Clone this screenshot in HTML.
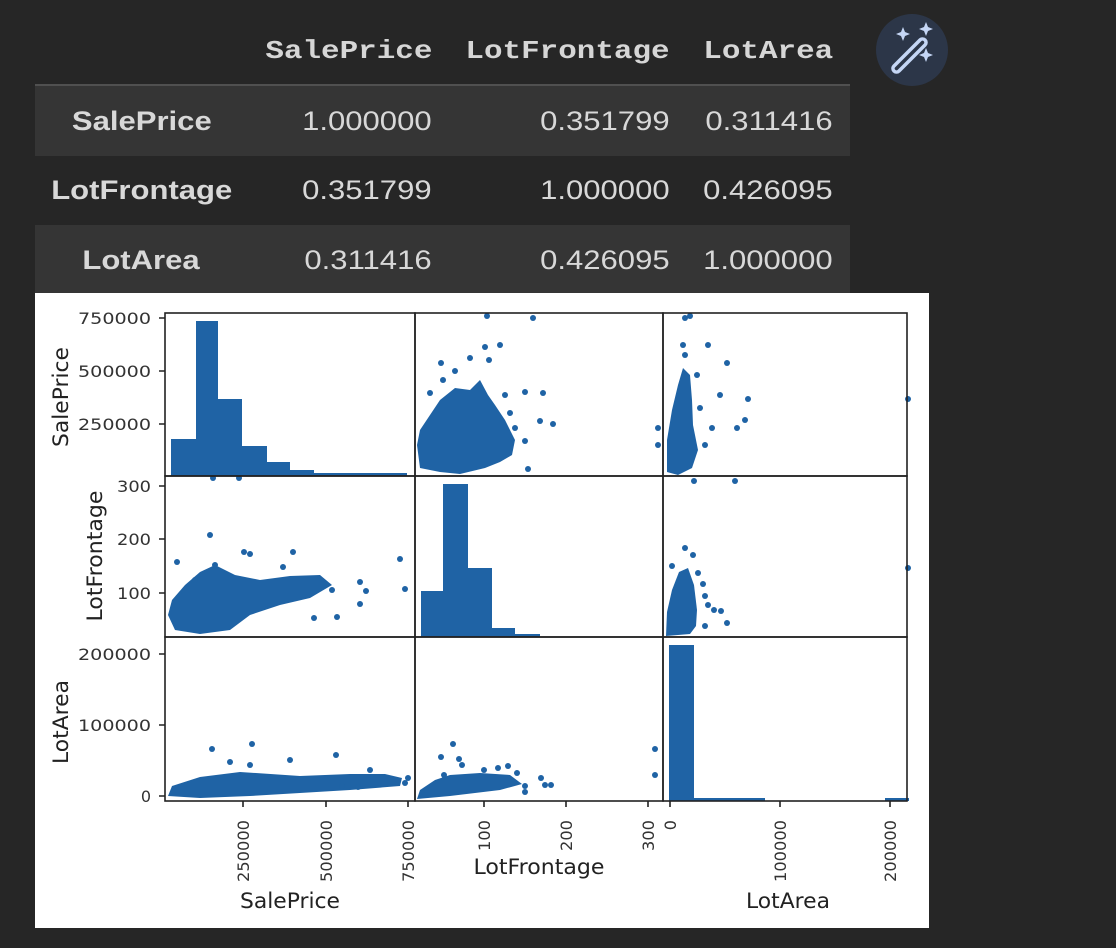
<!DOCTYPE html>
<html><head><meta charset="utf-8"><style>
body{margin:0;width:1116px;height:948px;background:#262626;overflow:hidden;position:relative;font-family:"Liberation Sans",sans-serif}
.hdr{position:absolute;top:36px;font-family:"Liberation Mono",monospace;font-weight:bold;font-size:26px;color:#d6d6d6;text-align:right}
.hdr span,.cell span{display:inline-block;transform-origin:right center}
.hdr span{transform:scaleX(1.19)}
.row{position:absolute;left:35px;width:815px;height:70px}
.row.l{background:#353535}
.cell{position:absolute;top:0;height:70px;line-height:70px;font-size:27px;color:#d8d8d8;text-align:right}
.cell span{transform:scaleX(1.15)}
.idx{font-weight:bold;text-align:center;left:0;width:213px}
.idx span{transform-origin:center center}
</style></head><body>
<div class="hdr" style="left:248px;width:184px"><span>SalePrice</span></div>
<div class="hdr" style="left:440px;width:230px"><span>LotFrontage</span></div>
<div class="hdr" style="left:686px;width:147px"><span>LotArea</span></div>
<div style="position:absolute;left:35px;top:84px;width:815px;height:2px;background:#505050"></div>
<div class="row l" style="top:86px"><div class="cell idx"><span>SalePrice</span></div><div class="cell" style="left:200px;width:197px"><span>1.000000</span></div><div class="cell" style="left:415px;width:220px"><span>0.351799</span></div><div class="cell" style="left:651px;width:147px"><span>0.311416</span></div></div>
<div class="row" style="top:155px"><div class="cell idx"><span>LotFrontage</span></div><div class="cell" style="left:200px;width:197px"><span>0.351799</span></div><div class="cell" style="left:415px;width:220px"><span>1.000000</span></div><div class="cell" style="left:651px;width:147px"><span>0.426095</span></div></div>
<div class="row l" style="top:225px;height:68px"><div class="cell idx"><span>LotArea</span></div><div class="cell" style="left:200px;width:197px"><span>0.311416</span></div><div class="cell" style="left:415px;width:220px"><span>0.426095</span></div><div class="cell" style="left:651px;width:147px"><span>1.000000</span></div></div>
<svg style="position:absolute;left:876px;top:14px" width="72" height="72" viewBox="0 0 72 72">
<circle cx="36" cy="36" r="36" fill="#2c3648"/>
<g fill="none" stroke="#c5d6f5" stroke-width="4" stroke-linecap="round"><path d="M18 52 L44 26 a3.5 3.5 0 0 1 5 5 L23 57 a3.5 3.5 0 0 1 -5 -5z" stroke-width="3.5"/></g>
<g fill="#c5d6f5"><path d="M27 13 l2 5 5 2 -5 2 -2 5 -2 -5 -5 -2 5 -2z"/><path d="M50 8 l2 5 5 2 -5 2 -2 5 -2 -5 -5 -2 5 -2z"/><path d="M50 34 l2 5 5 2 -5 2 -2 5 -2 -5 -5 -2 5 -2z"/></g>
</svg>
<svg style="position:absolute;left:0;top:0" width="1116" height="948" viewBox="0 0 1116 948">
<rect x="35" y="293" width="894" height="635" fill="#fff"/>
<g fill="#1f63a5">
<rect x="171" y="439" width="25" height="37"/><rect x="196" y="321" width="22" height="155"/><rect x="218" y="399" width="24" height="77"/><rect x="242" y="446" width="25" height="30"/><rect x="267" y="462" width="23" height="14"/><rect x="290" y="470" width="24" height="6"/><rect x="314" y="473" width="93" height="3"/>
<rect x="421" y="591" width="22" height="46"/><rect x="443" y="484" width="25" height="153"/><rect x="468" y="568" width="24" height="69"/><rect x="492" y="628" width="23" height="9"/><rect x="515" y="634" width="25" height="3"/>
<rect x="669" y="645" width="25" height="156"/><rect x="694" y="798" width="71" height="3"/><rect x="885" y="798" width="24" height="3"/>
<polygon points="417,445 420,430 430,415 440,400 455,388 470,390 480,380 488,395 495,405 505,420 515,440 512,455 500,462 485,468 460,474 440,472 420,468"/>
<polygon points="667,472 667,440 672,410 678,385 683,368 690,375 692,400 693,425 698,450 692,468 678,475"/>
<polygon points="168,615 172,600 185,585 200,572 215,565 235,575 260,580 290,576 320,575 332,585 310,598 280,605 250,615 230,630 200,634 175,630"/>
<polygon points="666,636 667,612 672,590 679,572 688,568 694,585 697,610 696,626 690,634"/>
<polygon points="168,796 172,786 200,777 240,772 300,776 350,774 385,774 402,778 400,786 350,790 250,796 200,798"/>
<polygon points="417,799 420,790 435,780 450,775 480,773 510,775 522,784 500,790 450,796"/>
</g>
<g fill="#1f63a5">
<circle cx="487" cy="316" r="3"/><circle cx="533" cy="318" r="3"/><circle cx="500" cy="345" r="3"/><circle cx="485" cy="347" r="3"/><circle cx="441" cy="363" r="3"/><circle cx="470" cy="358" r="3"/><circle cx="455" cy="371" r="3"/><circle cx="489" cy="360" r="3"/><circle cx="525" cy="392" r="3"/><circle cx="543" cy="393" r="3"/><circle cx="540" cy="421" r="3"/><circle cx="553" cy="424" r="3"/><circle cx="658" cy="428" r="3"/><circle cx="658" cy="445" r="3"/><circle cx="528" cy="469" r="3"/><circle cx="510" cy="413" r="3"/><circle cx="525" cy="441" r="3"/><circle cx="505" cy="395" r="3"/><circle cx="515" cy="428" r="3"/><circle cx="443" cy="380" r="3"/><circle cx="430" cy="393" r="3"/>
<circle cx="685" cy="318" r="3"/><circle cx="690" cy="316" r="3"/><circle cx="683" cy="345" r="3"/><circle cx="708" cy="345" r="3"/><circle cx="727" cy="363" r="3"/><circle cx="720" cy="395" r="3"/><circle cx="745" cy="420" r="3"/><circle cx="737" cy="428" r="3"/><circle cx="712" cy="428" r="3"/><circle cx="705" cy="445" r="3"/><circle cx="748" cy="399" r="3"/><circle cx="908" cy="399" r="3"/><circle cx="700" cy="408" r="3"/><circle cx="685" cy="355" r="3"/><circle cx="697" cy="375" r="3"/>
<circle cx="177" cy="562" r="3"/><circle cx="177" cy="606" r="3"/><circle cx="210" cy="535" r="3"/><circle cx="244" cy="552" r="3"/><circle cx="250" cy="554" r="3"/><circle cx="293" cy="552" r="3"/><circle cx="283" cy="567" r="3"/><circle cx="366" cy="591" r="3"/><circle cx="360" cy="604" r="3"/><circle cx="314" cy="618" r="3"/><circle cx="337" cy="617" r="3"/><circle cx="332" cy="590" r="3"/><circle cx="400" cy="559" r="3"/><circle cx="405" cy="589" r="3"/><circle cx="360" cy="582" r="3"/><circle cx="213" cy="478" r="3"/><circle cx="239" cy="478" r="3"/><circle cx="215" cy="565" r="3"/><circle cx="195" cy="580" r="3"/>
<circle cx="685" cy="548" r="3"/><circle cx="693" cy="555" r="3"/><circle cx="672" cy="566" r="3"/><circle cx="698" cy="573" r="3"/><circle cx="703" cy="584" r="3"/><circle cx="705" cy="596" r="3"/><circle cx="708" cy="605" r="3"/><circle cx="714" cy="610" r="3"/><circle cx="721" cy="611" r="3"/><circle cx="727" cy="623" r="3"/><circle cx="908" cy="568" r="3"/><circle cx="694" cy="481" r="3"/><circle cx="735" cy="481" r="3"/><circle cx="705" cy="626" r="3"/>
<circle cx="212" cy="749" r="3"/><circle cx="252" cy="744" r="3"/><circle cx="290" cy="760" r="3"/><circle cx="336" cy="755" r="3"/><circle cx="370" cy="770" r="3"/><circle cx="405" cy="783" r="3"/><circle cx="408" cy="778" r="3"/><circle cx="230" cy="762" r="3"/><circle cx="250" cy="765" r="3"/><circle cx="342" cy="786" r="3"/><circle cx="358" cy="787" r="3"/>
<circle cx="453" cy="744" r="3"/><circle cx="441" cy="757" r="3"/><circle cx="459" cy="759" r="3"/><circle cx="462" cy="765" r="3"/><circle cx="484" cy="770" r="3"/><circle cx="498" cy="768" r="3"/><circle cx="508" cy="766" r="3"/><circle cx="517" cy="773" r="3"/><circle cx="525" cy="786" r="3"/><circle cx="541" cy="778" r="3"/><circle cx="545" cy="785" r="3"/><circle cx="551" cy="785" r="3"/><circle cx="655" cy="749" r="3"/><circle cx="655" cy="775" r="3"/><circle cx="525" cy="792" r="3"/><circle cx="444" cy="775" r="3"/>
</g>
<g fill="none" stroke="#222" stroke-width="1.6">
<rect x="165" y="313" width="250" height="163"/><rect x="415" y="313" width="248" height="163"/><rect x="663" y="313" width="244" height="163"/>
<rect x="165" y="476" width="250" height="161"/><rect x="415" y="476" width="248" height="161"/><rect x="663" y="476" width="244" height="161"/>
<rect x="165" y="637" width="250" height="164"/><rect x="415" y="637" width="248" height="164"/><rect x="663" y="637" width="244" height="164"/>
<path d="M159 318h6M159 371h6M159 424h6M159 486h6M159 539h6M159 593h6M159 654h6M159 725h6M159 796h6"/>
<path d="M243 801v6M326 801v6M408 801v6M484 801v6M566 801v6M648 801v6M670 801v6M780 801v6M890 801v6"/>
</g>
<g font-family="DejaVu Sans,sans-serif" font-size="16" fill="#333" text-anchor="end">
<text x="151" y="324" textLength="73" lengthAdjust="spacingAndGlyphs">750000</text><text x="151" y="377" textLength="73" lengthAdjust="spacingAndGlyphs">500000</text><text x="151" y="430" textLength="73" lengthAdjust="spacingAndGlyphs">250000</text>
<text x="151" y="492" textLength="34" lengthAdjust="spacingAndGlyphs">300</text><text x="151" y="545" textLength="34" lengthAdjust="spacingAndGlyphs">200</text><text x="151" y="599" textLength="34" lengthAdjust="spacingAndGlyphs">100</text>
<text x="151" y="660" textLength="73" lengthAdjust="spacingAndGlyphs">200000</text><text x="151" y="731" textLength="73" lengthAdjust="spacingAndGlyphs">100000</text><text x="151" y="802">0</text>
<text transform="translate(249,820) rotate(-90)" textLength="62" lengthAdjust="spacingAndGlyphs">250000</text><text transform="translate(332,820) rotate(-90)" textLength="62" lengthAdjust="spacingAndGlyphs">500000</text><text transform="translate(414,820) rotate(-90)" textLength="62" lengthAdjust="spacingAndGlyphs">750000</text>
<text transform="translate(490,820) rotate(-90)" textLength="31" lengthAdjust="spacingAndGlyphs">100</text><text transform="translate(572,820) rotate(-90)" textLength="31" lengthAdjust="spacingAndGlyphs">200</text><text transform="translate(654,820) rotate(-90)" textLength="31" lengthAdjust="spacingAndGlyphs">300</text>
<text transform="translate(676,820) rotate(-90)">0</text><text transform="translate(786,820) rotate(-90)" textLength="62" lengthAdjust="spacingAndGlyphs">100000</text><text transform="translate(896,820) rotate(-90)" textLength="62" lengthAdjust="spacingAndGlyphs">200000</text>
</g>
<g font-family="DejaVu Sans,sans-serif" font-size="21" fill="#222" text-anchor="middle">
<text x="290" y="908" textLength="100" lengthAdjust="spacingAndGlyphs">SalePrice</text><text x="539" y="874" textLength="131" lengthAdjust="spacingAndGlyphs">LotFrontage</text><text x="788" y="908" textLength="84" lengthAdjust="spacingAndGlyphs">LotArea</text>
<text transform="translate(68,397) rotate(-90)" textLength="100" lengthAdjust="spacingAndGlyphs">SalePrice</text><text transform="translate(102,556) rotate(-90)" textLength="131" lengthAdjust="spacingAndGlyphs">LotFrontage</text><text transform="translate(68,722) rotate(-90)" textLength="84" lengthAdjust="spacingAndGlyphs">LotArea</text>
</g>
</svg>
</body></html>
